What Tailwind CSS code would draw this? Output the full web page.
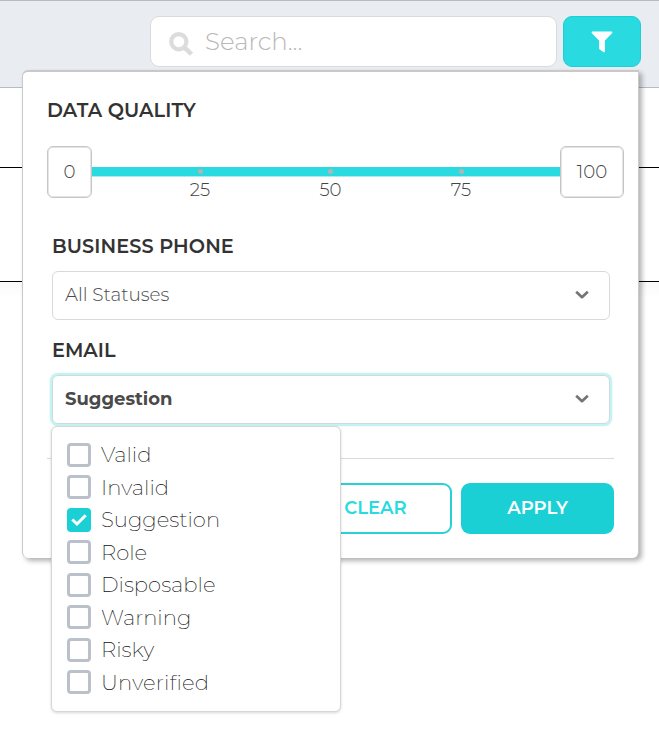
<!DOCTYPE html>
<html lang="en">
<head>
<meta charset="utf-8">
<title>Data quality filter</title>
<script src="https://cdn.jsdelivr.net/npm/@tailwindcss/browser@4"></script>
</head>
<body class="relative h-[731px] w-[659px] overflow-hidden bg-white font-[Montserrat,Inter,sans-serif] text-[#4a4a4a]">
<header class="flex h-[88px] items-start justify-end gap-1.5 border-y border-[#b5bac5] bg-[#e9ecf1] pt-[15px] pr-[18px]">
  <div class="flex h-[51px] w-[407px] items-center rounded-[9px] border border-[#dadada] bg-white pl-[18px]">
    <svg class="mt-1 h-6 w-6 shrink-0" viewBox="0 0 24 24" fill="none" stroke="#dcdcdc"><circle cx="9.8" cy="9.7" r="7.6" stroke-width="4.2"/><path d="M15.5 15.5L22.5 22.2" stroke-width="4.6"/></svg>
    <span class="mb-0.5 ml-3 text-[24.5px] leading-8 font-light text-[#b8b8b8]">Search...</span>
  </div>
  <button class="flex h-[51px] w-[78px] items-center justify-center rounded-[9px] border border-[#1bd0d5] bg-[#29dbe0]" aria-label="Filter">
    <svg class="h-[22px] w-[22px]" viewBox="0 0 22 22" fill="#fff"><path d="M1.2 .5H20.8Q22 1.2 21 2.2L13.9 9.6V20.5Q13.6 21.8 12.3 21.1L8.8 18.5Q8.1 18 8.1 17.2V9.6L.9 2.2Q.1 1.2 1.2 .5Z"/></svg>
  </button>
</header>
<main>
  <div class="h-20 border-b border-black"></div>
  <div class="h-[114px] border-b border-black"></div>
  <div class="h-4 bg-linear-to-b from-[#f9f9f9] to-white"></div>
</main>

<section class="absolute top-[70px] left-[22px] h-[488px] w-[617px] rounded-[6px] rounded-tr-none border-t-2 border-r border-l border-[#c9c9c9] bg-white shadow-[3px_3px_5px_rgba(0,0,0,0.3)]">
  <h2 class="mt-[26px] ml-[24px] h-6 text-[19.3px] leading-6 font-semibold tracking-[0.1px] whitespace-nowrap text-[#333]">DATA QUALITY</h2>
  <div class="mt-[24px] ml-[24px] flex h-[52px] w-[577px] text-[18.2px] font-light text-[#444]">
    <div class="flex w-[45px] items-center justify-center rounded-[6px] border-[1.5px] border-[#c6c6c6] bg-white shadow-[inset_0_0_0_1px_#e4e4e4]">0</div>
    <div class="grow pt-[21px]">
      <div class="flex h-[9px] items-center bg-[#29dbe0] pl-[106px] shadow-[0_1px_0_#a5eef0]">
        <i class="mr-[125px] h-[5px] w-[5px] rounded-full bg-[#b4b4b4]"></i><i class="mr-[126px] h-[5px] w-[5px] rounded-full bg-[#b4b4b4]"></i><i class="h-[5px] w-[5px] rounded-full bg-[#b4b4b4]"></i>
      </div>
      <div class="mt-[2px] ml-[88px] flex w-[301px] justify-between leading-6"><span class="w-10 text-center">25</span><span class="w-10 text-center">50</span><span class="w-10 text-center">75</span></div>
    </div>
    <div class="flex w-[64px] items-center justify-center rounded-[6px] border-[1.5px] border-[#c6c6c6] bg-white shadow-[inset_0_0_0_1px_#e4e4e4]">100</div>
  </div>
  <div class="ml-[29px] w-[558px]">
    <h2 class="mt-[36px] h-6 text-[19.3px] leading-6 font-semibold tracking-[0.1px] whitespace-nowrap text-[#333]">BUSINESS PHONE</h2>
    <div class="mt-[13px] flex h-[49px] items-center justify-between rounded-[6px] border border-[#d9d9d9] pr-[19px] pb-[2px] pl-3 text-[18.4px] font-light">
      <span>All Statuses</span>
      <svg class="h-4 w-4" viewBox="0 0 16 16" fill="none" stroke="#757575" stroke-width="2.7" stroke-linejoin="round"><path d="M2.2 4.7L8 10.2L13.8 4.7"/></svg>
    </div>
    <h2 class="mt-[18px] h-6 text-[19.3px] leading-6 font-semibold whitespace-nowrap text-[#333]">EMAIL</h2>
    <div class="mt-[13px] flex h-[49px] items-center justify-between rounded-[6px] border border-[#cfd9d9] pr-[19px] pb-[2px] pl-3 text-[18px] font-bold shadow-[0_0_0_2px_#c5f3f4,0_0_2px_2px_#c5f3f4]">
      <span class="mt-px">Suggestion</span>
      <svg class="h-4 w-4" viewBox="0 0 16 16" fill="none" stroke="#757575" stroke-width="2.7" stroke-linejoin="round"><path d="M2.2 4.7L8 10.2L13.8 4.7"/></svg>
    </div>
  </div>
  <div class="mt-[34px] ml-[24px] flex w-[567px] justify-end gap-[9px] border-t border-[#d9d9d9] pt-6 text-[18px] font-semibold">
    <button class="h-[51px] w-[153px] rounded-[9px] border-2 border-[#29d1d6] pb-px text-[#29dbe0]">CLEAR</button>
    <button class="h-[51px] w-[153px] rounded-[9px] bg-[#1bd0d5] pb-px text-white">APPLY</button>
  </div>
</section>

<ul class="absolute top-[426px] left-[51px] h-[286px] w-[290px] rounded-[6px] border border-[#d6d6d6] bg-white pt-[11.5px] pl-[15px] text-[21.2px] leading-[31px] font-extralight text-[#111] shadow-[0_1px_3px_rgba(0,0,0,0.16)] [font-variant-ligatures:none]">
  <li class="flex h-[32.5px] items-center gap-[10px]"><span class="h-6 w-6 rounded-[4px] border-3 border-[#bac1ca]"></span><span class="mb-px">Valid</span></li>
  <li class="flex h-[32.5px] items-center gap-[10px]"><span class="h-6 w-6 rounded-[4px] border-3 border-[#bac1ca]"></span><span>Invalid</span></li>
  <li class="flex h-[32.5px] items-center gap-[10px]"><span class="flex h-6 w-6 items-center justify-center rounded-[4px] bg-[#1bd0d5]"><svg class="h-4 w-4" viewBox="0 0 16 16" fill="none" stroke="#fff" stroke-width="3"><path d="M1.3 7.5L6 12L14.7 3.2"/></svg></span><span class="mb-px">Suggestion</span></li>
  <li class="flex h-[32.5px] items-center gap-[10px]"><span class="h-6 w-6 rounded-[4px] border-3 border-[#bac1ca]"></span><span>Role</span></li>
  <li class="flex h-[32.5px] items-center gap-[10px]"><span class="h-6 w-6 rounded-[4px] border-3 border-[#bac1ca]"></span><span class="mb-px">Disposable</span></li>
  <li class="flex h-[32.5px] items-center gap-[10px]"><span class="h-6 w-6 rounded-[4px] border-3 border-[#bac1ca]"></span><span>Warning</span></li>
  <li class="flex h-[32.5px] items-center gap-[10px]"><span class="h-6 w-6 rounded-[4px] border-3 border-[#bac1ca]"></span><span class="mb-px">Risky</span></li>
  <li class="flex h-[32.5px] items-center gap-[10px]"><span class="h-6 w-6 rounded-[4px] border-3 border-[#bac1ca]"></span><span class="tracking-[0.2px]">Unverified</span></li>
</ul>
</body>
</html>
